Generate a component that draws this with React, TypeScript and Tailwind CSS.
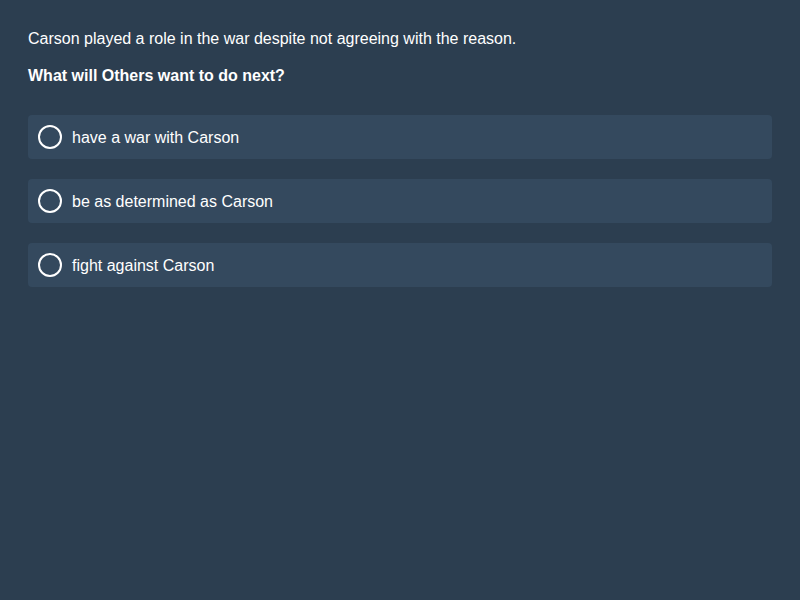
import React, { useState } from 'react';

const options = [
  'have a war with Carson',
  'be as determined as Carson',
  'fight against Carson',
];

export default function App() {
  const [selected, setSelected] = useState<number | null>(null);

  return (
    <div
      className="w-[800px] h-[600px] bg-[#2c3e50] text-white px-7 pt-[30px]"
      style={{ fontFamily: '"Liberation Sans", Arial, sans-serif' }}
    >
      {/* Context */}
      <p className="text-base leading-[18px] mb-[19px]">
        Carson played a role in the war despite not agreeing with the reason.
      </p>
      <p className="text-base leading-[18px] font-bold mb-[30px]">
        What will Others want to do next?
      </p>

      {/* Answers */}
      <div className="flex flex-col gap-5">
        {options.map((opt, i) => (
          <button
            key={opt}
            onClick={() => setSelected(i)}
            className="flex items-center gap-2.5 p-2.5 bg-[#34495e] rounded text-left"
          >
            <span className="w-6 h-6 rounded-full border-2 border-white flex items-center justify-center">
              {selected === i && <span className="w-3 h-3 rounded-full bg-white" />}
            </span>
            <span className="text-base leading-[20px] pt-[2px]">{opt}</span>
          </button>
        ))}
      </div>
    </div>
  );
}
